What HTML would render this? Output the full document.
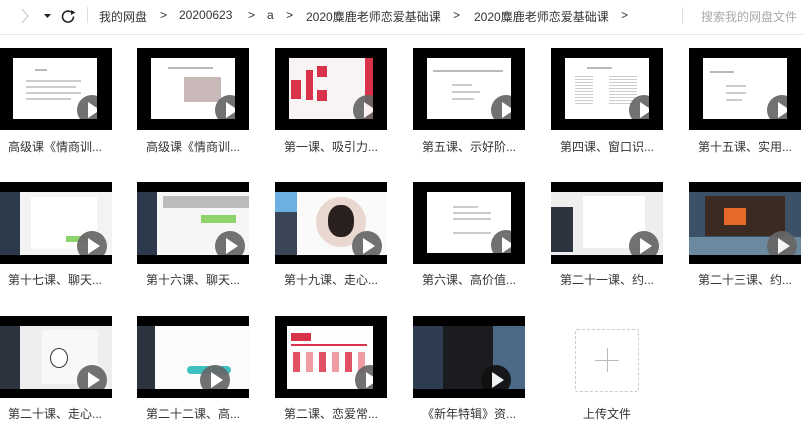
<!DOCTYPE html>
<html><head><meta charset="utf-8"><style>
*{margin:0;padding:0;box-sizing:border-box}
body{width:804px;height:420px;overflow:hidden;background:#fff;font-family:"Liberation Sans","Noto Sans CJK SC",sans-serif;color:#333;position:relative}
.a{position:absolute}
.top{font-size:12px;color:#333;top:8px;white-space:nowrap}
.t{position:absolute;width:112px;height:82px;background:#000;overflow:hidden}
.in{position:absolute;overflow:hidden}
.pl{position:absolute;width:30px;height:30px;border-radius:50%;background:#666;opacity:.92}
.pl:after{content:"";position:absolute;left:11px;top:7px;border-left:12px solid #fff;border-top:8px solid transparent;border-bottom:8px solid transparent}
.lb{position:absolute;font-size:12px;color:#333;white-space:nowrap}
.ln{position:absolute;height:2px;background:#bbb}
</style></head><body>
<div class="a" style="left:0;top:34px;width:804px;height:1px;background:#e8e8e8"></div>
<svg class="a" style="left:18px;top:6px" width="80" height="20">
<path d="M4 3 L10 10 L4 17" fill="none" stroke="#ccc" stroke-width="1.2"/>
<path d="M26 8 L33 8 L29.5 12 Z" fill="#222"/>
<path d="M53 6 A5.5 5.5 0 1 0 55.5 10.5" fill="none" stroke="#222" stroke-width="1.6"/>
<path d="M53 4 L57.5 6.5 L53 9 Z" fill="#222"/>
</svg>
<div class="a" style="left:87px;top:7px;width:1px;height:16px;background:#ddd"></div>
<div class="top a" style="left:99px">我的网盘</div>
<div class="top a" style="left:160px">&gt;</div>
<div class="top a" style="left:179px">20200623</div>
<div class="top a" style="left:248px">&gt;</div>
<div class="top a" style="left:267px">a</div>
<div class="top a" style="left:286px">&gt;</div>
<div class="top a" style="left:306px">2020麋鹿老师恋爱基础课</div>
<div class="top a" style="left:453px">&gt;</div>
<div class="top a" style="left:474px">2020麋鹿老师恋爱基础课</div>
<div class="top a" style="left:621px">&gt;</div>
<div class="a" style="left:682px;top:7px;width:1px;height:16px;background:#ddd"></div>
<div class="top a" style="left:701px;color:#aaa">搜索我的网盘文件</div>

<!-- row 1 -->
<div class="t" style="left:0;top:48px"><div class="in" style="left:13px;top:10px;width:84px;height:61px;background:#fff">
<div class="ln" style="left:22px;top:11px;width:12px"></div><div class="ln" style="left:13px;top:22px;width:55px;background:#ccc"></div><div class="ln" style="left:13px;top:28px;width:50px;background:#ccc"></div><div class="ln" style="left:13px;top:34px;width:55px;background:#ccc"></div><div class="ln" style="left:13px;top:40px;width:45px;background:#ccc"></div>
<div class="pl" style="left:64px;top:37px"></div></div></div>
<div class="t" style="left:137px;top:48px"><div class="in" style="left:14px;top:10px;width:84px;height:61px;background:#fff">
<div class="ln" style="left:17px;top:9px;width:45px"></div><div class="a" style="left:33px;top:19px;width:37px;height:25px;background:#c9b8b8"></div>
<div class="pl" style="left:64px;top:37px"></div></div></div>
<div class="t" style="left:275px;top:48px"><div class="in" style="left:14px;top:10px;width:84px;height:61px;background:#f8f4f4">
<div class="a" style="left:76px;top:0;width:8px;height:61px;background:#d8334a"></div>
<div class="a" style="left:2px;top:22px;width:10px;height:19px;background:#d8334a"></div><div class="a" style="left:17px;top:12px;width:7px;height:30px;background:#d8334a"></div>
<div class="a" style="left:28px;top:8px;width:10px;height:11px;background:#d8334a"></div><div class="a" style="left:28px;top:32px;width:10px;height:11px;background:#d8334a"></div>
<div class="pl" style="left:64px;top:37px"></div></div></div>
<div class="t" style="left:413px;top:48px"><div class="in" style="left:14px;top:10px;width:84px;height:61px;background:#fff">
<div class="ln" style="left:6px;top:12px;width:70px"></div><div class="ln" style="left:25px;top:26px;width:20px;background:#ccc"></div><div class="ln" style="left:25px;top:33px;width:28px;background:#ccc"></div><div class="ln" style="left:25px;top:40px;width:22px;background:#ccc"></div>
<div class="pl" style="left:64px;top:37px"></div></div></div>
<div class="t" style="left:551px;top:48px"><div class="in" style="left:14px;top:10px;width:84px;height:61px;background:#fff">
<div class="ln" style="left:22px;top:9px;width:25px"></div><div class="ln" style="left:10px;top:18px;width:18px;height:28px;background:repeating-linear-gradient(#ccc 0 1px,#fff 1px 3px)"></div><div class="ln" style="left:44px;top:18px;width:28px;height:28px;background:repeating-linear-gradient(#ccc 0 1px,#fff 1px 3px)"></div>
<div class="pl" style="left:64px;top:37px"></div></div></div>
<div class="t" style="left:689px;top:48px"><div class="in" style="left:14px;top:10px;width:84px;height:61px;background:#fff">
<div class="ln" style="left:7px;top:13px;width:24px"></div><div class="ln" style="left:23px;top:27px;width:20px;background:#ccc"></div><div class="ln" style="left:23px;top:34px;width:20px;background:#ccc"></div><div class="ln" style="left:23px;top:41px;width:16px;background:#ccc"></div>
<div class="pl" style="left:64px;top:37px"></div></div></div>
<div class="lb" style="left:8px;top:138px">高级课《情商训...</div>
<div class="lb" style="left:146px;top:138px">高级课《情商训...</div>
<div class="lb" style="left:284px;top:138px">第一课、吸引力...</div>
<div class="lb" style="left:422px;top:138px">第五课、示好阶...</div>
<div class="lb" style="left:560px;top:138px">第四课、窗口识...</div>
<div class="lb" style="left:698px;top:138px">第十五课、实用...</div>

<!-- row 2 -->
<div class="t" style="left:0;top:182px"><div class="in" style="left:0;top:10px;width:112px;height:63px;background:#f3f3f3">
<div class="a" style="left:0;top:0;width:20px;height:63px;background:#2c3a4c"></div><div class="a" style="left:31px;top:5px;width:66px;height:52px;background:#fff"></div><div class="a" style="left:66px;top:44px;width:20px;height:6px;background:#8fd46a"></div>
<div class="pl" style="left:77px;top:39px"></div></div></div>
<div class="t" style="left:137px;top:182px"><div class="in" style="left:0;top:10px;width:112px;height:63px;background:#f6f6f6">
<div class="a" style="left:0;top:0;width:20px;height:63px;background:#2c3a4c"></div><div class="a" style="left:26px;top:4px;width:86px;height:12px;background:#bbb"></div><div class="a" style="left:64px;top:23px;width:35px;height:8px;background:#8fd46a"></div>
<div class="pl" style="left:78px;top:39px"></div></div></div>
<div class="t" style="left:275px;top:182px"><div class="in" style="left:0;top:10px;width:112px;height:63px;background:#fafafa">
<div class="a" style="left:0;top:0;width:22px;height:63px;background:#3a4656"></div><div class="a" style="left:0;top:0;width:22px;height:20px;background:#6ab0e0"></div><div class="a" style="left:41px;top:5px;width:50px;height:50px;border-radius:50%;background:#e9d8cf"></div><div class="a" style="left:53px;top:13px;width:26px;height:32px;border-radius:45%;background:#2a2020"></div>
<div class="pl" style="left:77px;top:39px"></div></div></div>
<div class="t" style="left:413px;top:182px"><div class="in" style="left:14px;top:10px;width:84px;height:61px;background:#fff">
<div class="ln" style="left:26px;top:14px;width:25px;background:#ccc"></div><div class="ln" style="left:26px;top:20px;width:38px;background:#ccc"></div><div class="ln" style="left:26px;top:26px;width:38px;background:#ccc"></div><div class="ln" style="left:26px;top:40px;width:38px;background:#ccc"></div>
<div class="pl" style="left:64px;top:38px"></div></div></div>
<div class="t" style="left:551px;top:182px"><div class="in" style="left:0;top:10px;width:112px;height:63px;background:#eee">
<div class="a" style="left:0;top:15px;width:22px;height:45px;background:#2c3440"></div><div class="a" style="left:32px;top:4px;width:62px;height:52px;background:#fff"></div>
<div class="pl" style="left:78px;top:39px"></div></div></div>
<div class="t" style="left:689px;top:182px"><div class="in" style="left:0;top:10px;width:112px;height:63px;background:#3c5066">
<div class="a" style="left:16px;top:4px;width:80px;height:40px;background:#3a2a22"></div><div class="a" style="left:35px;top:16px;width:22px;height:17px;background:#e56a2a"></div><div class="a" style="left:0;top:45px;width:112px;height:18px;background:#6b8aa0"></div>
<div class="pl" style="left:78px;top:39px"></div></div></div>
<div class="lb" style="left:8px;top:271px">第十七课、聊天...</div>
<div class="lb" style="left:146px;top:271px">第十六课、聊天...</div>
<div class="lb" style="left:284px;top:271px">第十九课、走心...</div>
<div class="lb" style="left:422px;top:271px">第六课、高价值...</div>
<div class="lb" style="left:560px;top:271px">第二十一课、约...</div>
<div class="lb" style="left:698px;top:271px">第二十三课、约...</div>

<!-- row 3 -->
<div class="t" style="left:0;top:316px"><div class="in" style="left:0;top:10px;width:112px;height:63px;background:#eee">
<div class="a" style="left:0;top:0;width:20px;height:63px;background:#2c3440"></div><div class="a" style="left:42px;top:4px;width:56px;height:54px;background:#f8f8f8"></div><div class="a" style="left:50px;top:22px;width:18px;height:20px;border-radius:50%;border:1px solid #333;background:#fff"></div>
<div class="pl" style="left:77px;top:39px"></div></div></div>
<div class="t" style="left:137px;top:316px"><div class="in" style="left:0;top:10px;width:112px;height:63px;background:#fbfbfb">
<div class="a" style="left:0;top:0;width:18px;height:63px;background:#2c3440"></div><div class="a" style="left:50px;top:40px;width:44px;height:8px;border-radius:4px;background:#3cc0c0"></div>
<div class="pl" style="left:63px;top:39px"></div></div></div>
<div class="t" style="left:275px;top:316px"><div class="in" style="left:12px;top:10px;width:86px;height:63px;background:#fdfdfd">
<div class="a" style="left:4px;top:7px;width:20px;height:8px;background:#d8334a"></div><div class="a" style="left:4px;top:18px;width:76px;height:2px;background:#d8334a"></div>
<div class="a" style="left:6px;top:26px;width:7px;height:20px;background:#e05062"></div><div class="a" style="left:19px;top:26px;width:7px;height:20px;background:#f09aa4"></div><div class="a" style="left:32px;top:26px;width:7px;height:20px;background:#e05062"></div><div class="a" style="left:45px;top:26px;width:7px;height:20px;background:#f09aa4"></div><div class="a" style="left:58px;top:26px;width:7px;height:20px;background:#e05062"></div><div class="a" style="left:71px;top:26px;width:7px;height:20px;background:#f09aa4"></div>
<div class="pl" style="left:68px;top:39px"></div></div></div>
<div class="t" style="left:413px;top:316px"><div class="in" style="left:0;top:10px;width:112px;height:63px;background:#1a1c20">
<div class="a" style="left:0;top:0;width:30px;height:63px;background:#2e3e50"></div><div class="a" style="left:80px;top:0;width:32px;height:63px;background:#4a6a88"></div>
<div class="pl" style="left:68px;top:39px;background:#111"></div></div></div>
<div class="a" style="left:575px;top:329px;width:64px;height:63px;border:1px dashed #ccc;border-radius:2px"></div>
<div class="a" style="left:595px;top:360px;width:24px;height:1px;background:#bbb"></div>
<div class="a" style="left:607px;top:348px;width:1px;height:24px;background:#bbb"></div>
<div class="lb" style="left:8px;top:405px">第二十课、走心...</div>
<div class="lb" style="left:146px;top:405px">第二十二课、高...</div>
<div class="lb" style="left:284px;top:405px">第二课、恋爱常...</div>
<div class="lb" style="left:422px;top:405px">《新年特辑》资...</div>
<div class="lb" style="left:583px;top:405px">上传文件</div>
</body></html>
